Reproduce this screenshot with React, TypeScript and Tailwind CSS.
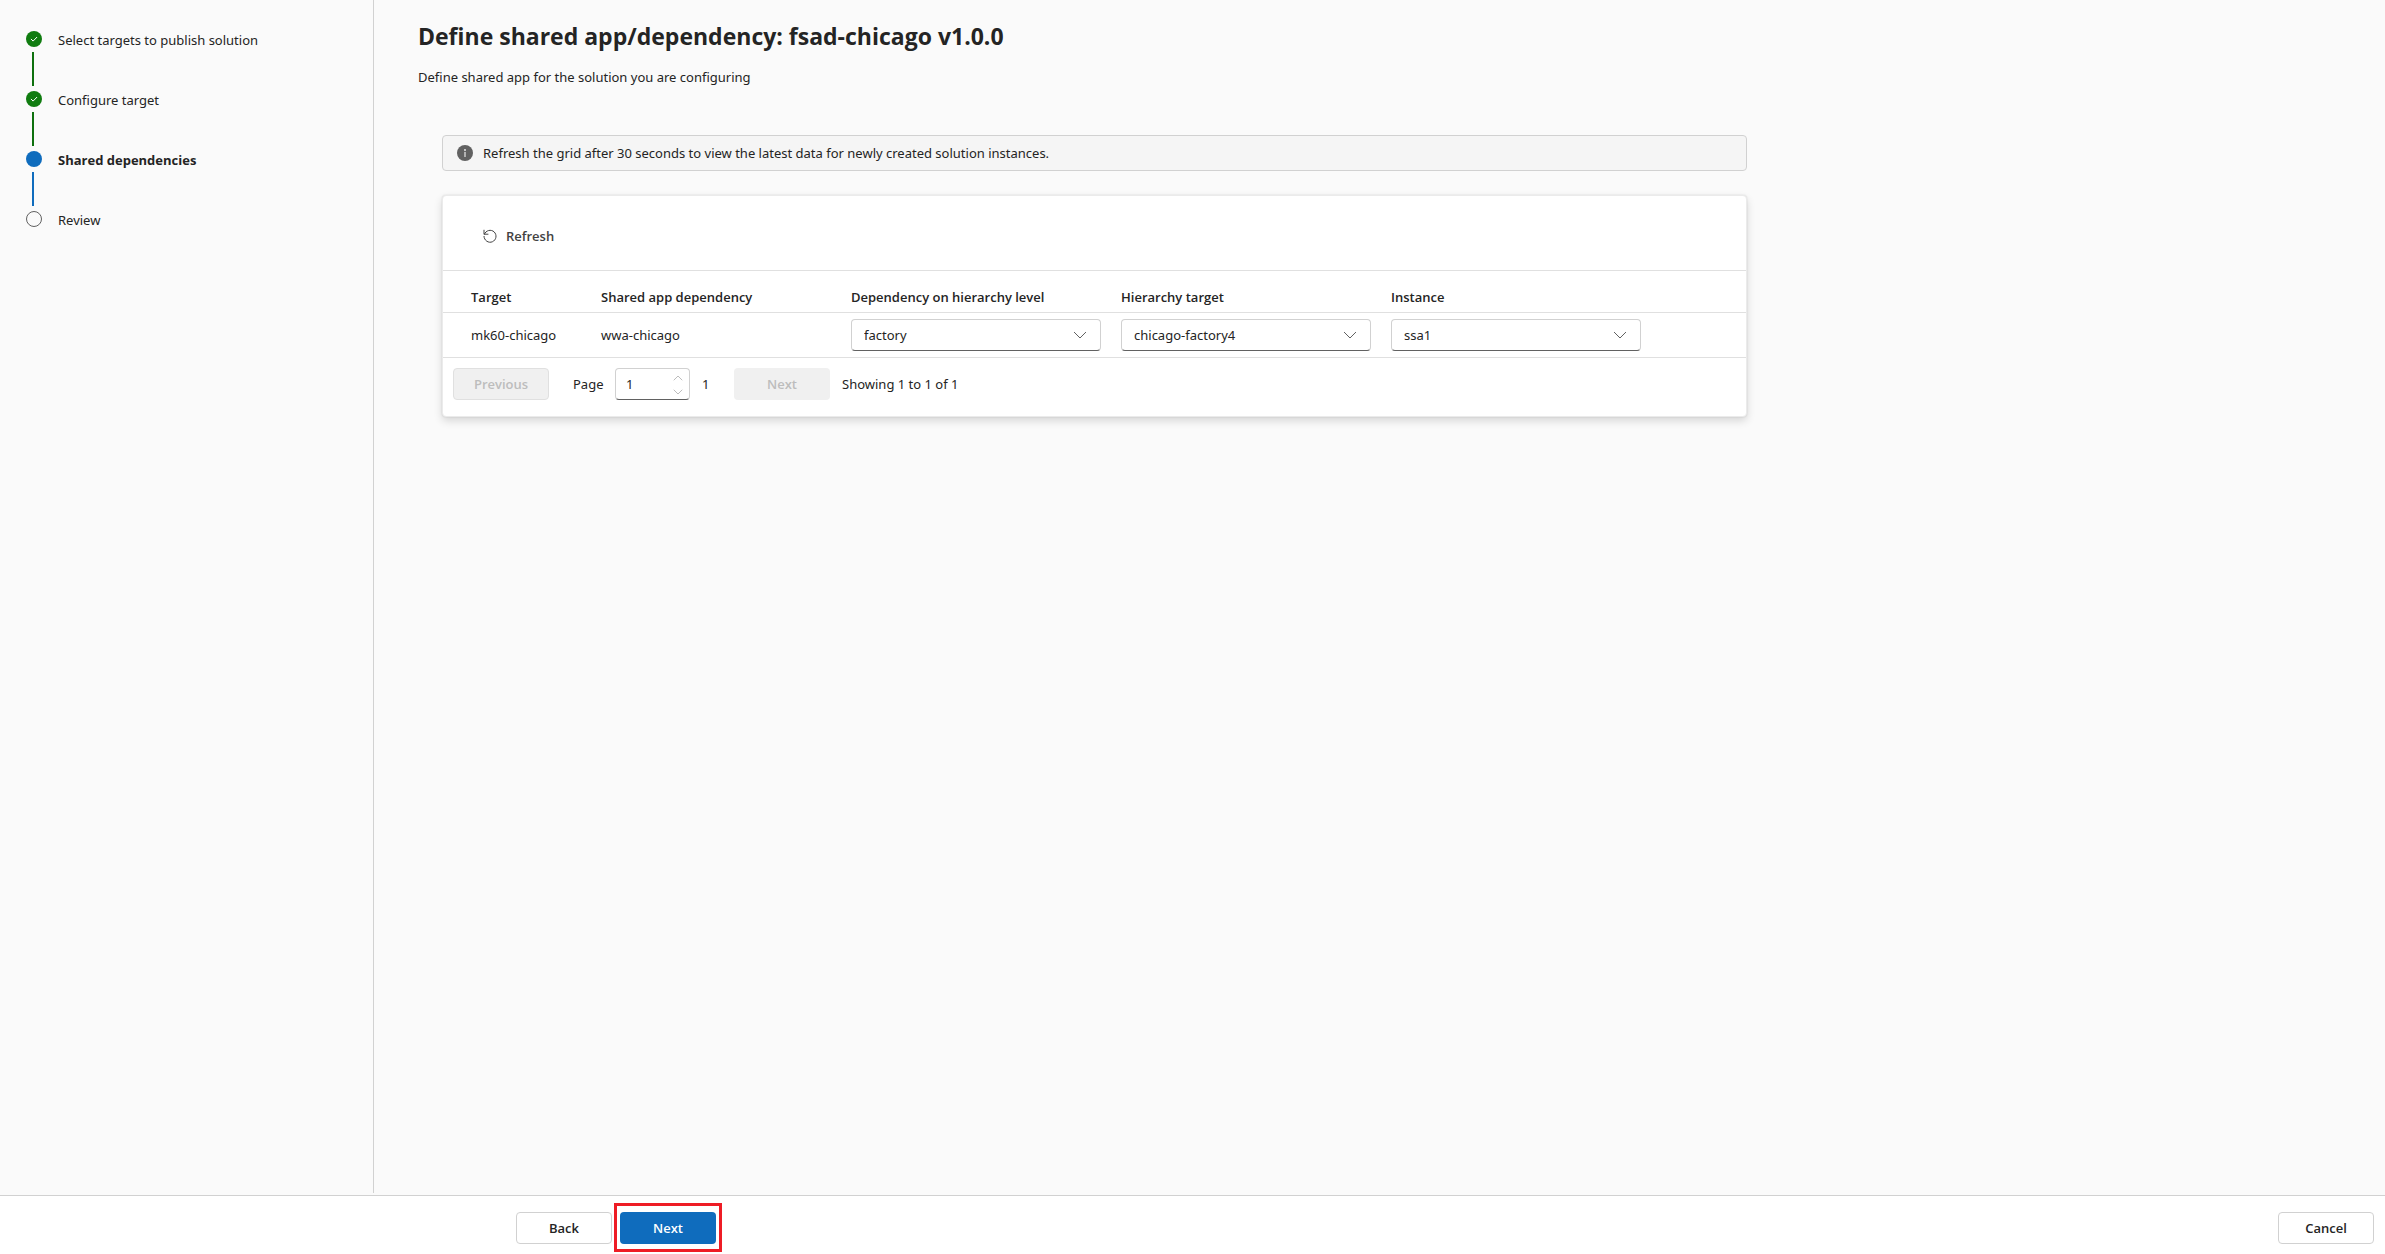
import { useState, type ReactNode } from "react";

type StepState = "done" | "current" | "todo";

const steps: { label: string; state: StepState }[] = [
  { label: "Select targets to publish solution", state: "done" },
  { label: "Configure target", state: "done" },
  { label: "Shared dependencies", state: "current" },
  { label: "Review", state: "todo" },
];

function StepIcon({ state }: { state: StepState }) {
  if (state === "done") {
    return (
      <svg viewBox="0 0 16 16" className="size-4" aria-hidden="true">
        <circle cx="8" cy="8" r="8" fill="#107c10" />
        <path d="M5.2 8.2l1.9 1.9 3.7-3.8" fill="none" stroke="#fff" strokeWidth="1" strokeLinecap="round" strokeLinejoin="round" />
      </svg>
    );
  }
  if (state === "current") return <span className="block size-4 rounded-full bg-[#0f6cbd]" />;
  return <span className="block size-4 rounded-full border border-[#616161]" />;
}

function Steps() {
  return (
    <ol className="flex flex-col">
      {steps.map((step, i) => (
        <li key={step.label} className="flex gap-4" aria-current={step.state === "current" ? "step" : undefined}>
          <div className="flex w-4 flex-col items-center">
            <StepIcon state={step.state} />
            {i < steps.length - 1 && (
              <span
                className={
                  step.state === "done"
                    ? "my-[5px] mr-0.5 h-[34px] w-0.5 bg-[#0e700e]"
                    : "my-[5px] mr-0.5 h-[34px] w-0.5 bg-[#0f6cbd]"
                }
              />
            )}
          </div>
          <span className={step.state === "current" ? "font-['Open_Sans',sans-serif] leading-[18px] font-bold" : "leading-[18px]"}>
            {step.label}
          </span>
        </li>
      ))}
    </ol>
  );
}

function Dropdown({ label, value }: { label: string; value: string }) {
  return (
    <div className="relative w-full">
      <select
        aria-label={label}
        defaultValue={value}
        className="block h-8 w-full appearance-none rounded border border-[#d1d1d1] border-b-[#616161] bg-white pr-9 pl-3 leading-5"
      >
        <option>{value}</option>
      </select>
      <svg viewBox="0 0 20 20" className="pointer-events-none absolute top-1.5 right-[11px] size-5" aria-hidden="true">
        <path d="M4.3 7.3L10 13l5.7-5.7" fill="none" stroke="#616161" strokeWidth="1" strokeLinecap="round" strokeLinejoin="round" />
      </svg>
    </div>
  );
}

function PageInput() {
  const [page, setPage] = useState("1");
  return (
    <div className="flex h-8 w-[75px] items-stretch rounded border border-[#d1d1d1] border-b-[#616161] bg-white">
      <input
        id="page"
        type="text"
        inputMode="numeric"
        value={page}
        onChange={(e) => setPage(e.target.value)}
        className="w-full min-w-0 bg-transparent pl-2.5 outline-none"
      />
      <div className="flex w-4 shrink-0 flex-col">
        <button type="button" disabled aria-label="Next page" className="flex flex-1 items-center justify-start pt-0.5">
          <svg viewBox="0 0 10 6" className="h-1.5 w-2.5" aria-hidden="true">
            <path d="M1 5l4-4 4 4" fill="none" stroke="#bdbdbd" strokeWidth="1" strokeLinecap="round" />
          </svg>
        </button>
        <button type="button" disabled aria-label="Previous page" className="flex flex-1 items-center justify-start">
          <svg viewBox="0 0 10 6" className="h-1.5 w-2.5" aria-hidden="true">
            <path d="M1 1l4 4 4-4" fill="none" stroke="#bdbdbd" strokeWidth="1" strokeLinecap="round" />
          </svg>
        </button>
      </div>
    </div>
  );
}

function HeaderCell({ children }: { children: ReactNode }) {
  return (
    <th
      scope="col"
      className="h-[42px] border-b border-[#e0e0e0] p-0 pt-2.5 text-left font-['Open_Sans',sans-serif] font-semibold whitespace-nowrap first:pl-7"
    >
      {children}
    </th>
  );
}

function Cell({ children }: { children: ReactNode }) {
  return <td className="h-[45px] border-b border-[#e0e0e0] p-0 pr-5 first:pr-0 first:pl-7">{children}</td>;
}

function DependencyCard() {
  return (
    <section className="rounded border border-[#ebebeb] bg-white shadow-[0_0_2px_rgba(0,0,0,0.12),0_4px_8px_rgba(0,0,0,0.14)]">
      <div className="flex h-[75px] items-center border-b border-[#e0e0e0] px-[37px] pt-1.5">
        <button type="button" className="flex items-center gap-1.5 font-['Open_Sans',sans-serif] font-semibold text-[#424242]">
          <svg viewBox="0 0 20 20" className="size-5" aria-hidden="true">
            <path
              d="M4.4 8.1A6 6 0 1 1 4 10.4M4 4.2v4h4"
              fill="none"
              stroke="#424242"
              strokeWidth="1"
              strokeLinecap="round"
              strokeLinejoin="round"
            />
          </svg>
          Refresh
        </button>
      </div>
      <table className="w-full table-fixed border-separate border-spacing-0">
        <colgroup>
          <col className="w-[158px]" />
          <col className="w-[250px]" />
          <col className="w-[270px]" />
          <col className="w-[270px]" />
          <col />
        </colgroup>
        <thead>
          <tr>
            <HeaderCell>Target</HeaderCell>
            <HeaderCell>Shared app dependency</HeaderCell>
            <HeaderCell>Dependency on hierarchy level</HeaderCell>
            <HeaderCell>Hierarchy target</HeaderCell>
            <HeaderCell>Instance</HeaderCell>
          </tr>
        </thead>
        <tbody>
          <tr>
            <Cell>mk60-chicago</Cell>
            <Cell>wwa-chicago</Cell>
            <Cell>
              <Dropdown label="Dependency on hierarchy level" value="factory" />
            </Cell>
            <Cell>
              <Dropdown label="Hierarchy target" value="chicago-factory4" />
            </Cell>
            <Cell>
              <div className="max-w-[250px]">
                <Dropdown label="Instance" value="ssa1" />
              </div>
            </Cell>
          </tr>
        </tbody>
      </table>
      <nav aria-label="Pagination" className="flex items-center px-2.5 pt-2.5 pb-4">
        <button
          type="button"
          disabled
          className="h-8 w-24 rounded border border-[#e0e0e0] bg-[#f0f0f0] font-['Open_Sans',sans-serif] font-semibold text-[#bdbdbd]"
        >
          Previous
        </button>
        <label htmlFor="page" className="ml-6 w-[42px]">
          Page
        </label>
        <PageInput />
        <span className="w-11 pl-3">1</span>
        <button
          type="button"
          disabled
          className="h-8 w-24 rounded bg-[#f0f0f0] font-['Open_Sans',sans-serif] font-semibold text-[#bdbdbd]"
        >
          Next
        </button>
        <span className="ml-3">Showing 1 to 1 of 1</span>
      </nav>
    </section>
  );
}

export default function App() {
  return (
    <div className="flex min-h-screen flex-col bg-[#fafafa] font-['Noto_Sans',sans-serif] text-[13px] leading-5 text-[#242424]">
      <div className="flex grow pb-0.5">
        <aside className="w-[374px] shrink-0 border-r border-[#d1d1d1] px-[26px] pt-[31px]">
          <Steps />
        </aside>
        <main className="min-w-0 grow px-11 pt-5">
          <h1 className="font-['Open_Sans',sans-serif] text-[23px] leading-8 font-bold">
            Define shared app/dependency: fsad-chicago v1.0.0
          </h1>
          <p className="mt-[15px]">Define shared app for the solution you are configuring</p>
          <div className="mt-12 ml-6 flex max-w-[1305px] flex-col gap-6">
            <div role="status" className="flex h-9 items-center gap-2.5 rounded border border-[#d1d1d1] bg-[#f5f5f5] px-3.5">
              <svg viewBox="0 0 16 16" className="size-4" aria-hidden="true">
                <circle cx="8" cy="8" r="8" fill="#616161" />
                <circle cx="8" cy="5" r="0.9" fill="#f5f5f5" />
                <path d="M8 7.4v4" stroke="#f5f5f5" strokeWidth="1.1" strokeLinecap="round" />
              </svg>
              <span>Refresh the grid after 30 seconds to view the latest data for newly created solution instances.</span>
            </div>
            <DependencyCard />
          </div>
        </main>
      </div>
      <footer className="flex h-[59px] items-start border-t border-[#d1d1d1] bg-white pt-4 pr-[11px] pl-[516px] font-['Open_Sans',sans-serif] font-semibold">
        <button type="button" className="h-8 w-24 rounded border border-[#d1d1d1] bg-white">
          Back
        </button>
        <div className="relative ml-2">
          <button type="button" className="block h-8 w-24 rounded bg-[#0f6cbd] text-white">
            Next
          </button>
          <span className="pointer-events-none absolute -inset-x-1.5 -top-[9px] -bottom-2 border-3 border-[#ee1c25]" />
        </div>
        <button type="button" className="ml-auto h-8 w-24 rounded border border-[#d1d1d1] bg-white">
          Cancel
        </button>
      </footer>
    </div>
  );
}
